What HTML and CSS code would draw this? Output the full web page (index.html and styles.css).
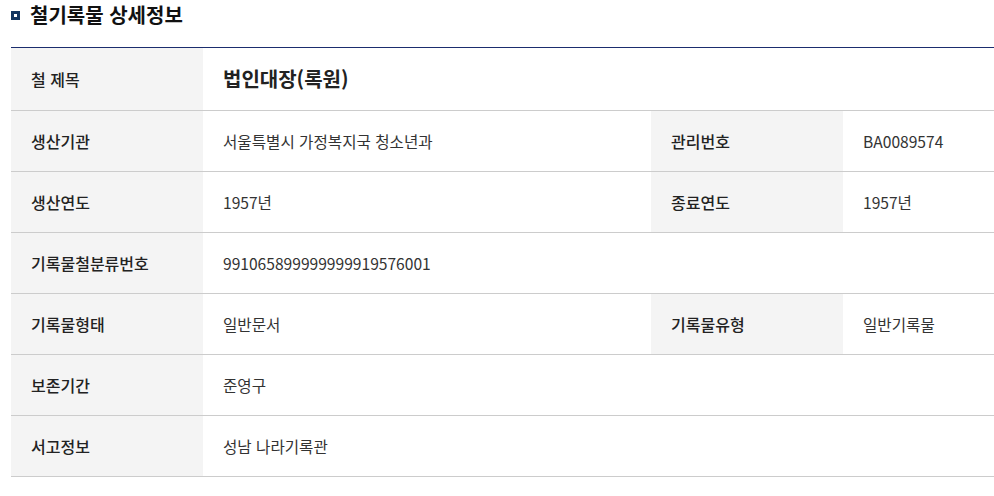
FILE: index.html
```html
<!DOCTYPE html>
<html lang="ko">
<head>
<meta charset="utf-8">
<link rel="stylesheet" href="styles.css">
</head>
<body>
<div class="wrap">
  <h2 class="heading"><span class="bullet"></span>철기록물 상세정보</h2>
  <table class="detail">
    <colgroup>
      <col class="c-label"><col class="c-value"><col class="c-label"><col>
    </colgroup>
    <tr class="first">
      <th>철 제목</th>
      <td colspan="3" class="title">법인대장(록원)</td>
    </tr>
    <tr>
      <th>생산기관</th><td>서울특별시 가정복지국 청소년과</td>
      <th>관리번호</th><td>BA0089574</td>
    </tr>
    <tr>
      <th>생산연도</th><td>1957년</td>
      <th>종료연도</th><td>1957년</td>
    </tr>
    <tr>
      <th>기록물철분류번호</th><td colspan="3">991065899999999919576001</td>
    </tr>
    <tr>
      <th>기록물형태</th><td>일반문서</td>
      <th>기록물유형</th><td>일반기록물</td>
    </tr>
    <tr>
      <th>보존기간</th><td colspan="3">준영구</td>
    </tr>
    <tr>
      <th>서고정보</th><td colspan="3">성남 나라기록관</td>
    </tr>
  </table>
</div>
</body>
</html>
```

FILE: styles.css
```css
html, body {
  margin: 0;
  padding: 0;
  background: #fff;
}
body {
  font-family: "Noto Sans CJK KR", "Noto Sans", sans-serif;
  color: #333;
}
.wrap {
  padding: 0 0 0 11px;
}
.heading {
  margin: 0;
  height: 47px;
  padding-top: 1px;
  box-sizing: border-box;
  display: flex;
  align-items: flex-start;
  font-size: 20px;
  font-weight: 700;
  color: #111;
  line-height: 28px;
}
.bullet {
  width: 9px;
  height: 9px;
  border: 3px solid #12355f;
  box-sizing: border-box;
  margin: 10px 10px 0 0;
  flex: none;
}
.detail {
  width: 1000px;
  border-collapse: collapse;
  border-top: 1px solid #1b2d6e;
  table-layout: fixed;
}
.c-label { width: 192px; }
.c-value { width: 448px; }
.detail th,
.detail td {
  height: 60px;
  padding: 0 20px;
  border-bottom: 1px solid #cccccc;
  text-align: left;
  vertical-align: middle;
  line-height: 22px;
}
.detail tr.first th,
.detail tr.first td {
  height: 62px;
}
.detail th {
  background: #f4f4f4;
  font-size: 16px;
  font-weight: 500;
  color: #222;
}
.detail td {
  font-size: 15.6px;
  font-weight: 400;
  color: #333;
}
.detail td.title {
  font-size: 20px;
  font-weight: 700;
  color: #222;
}
```
